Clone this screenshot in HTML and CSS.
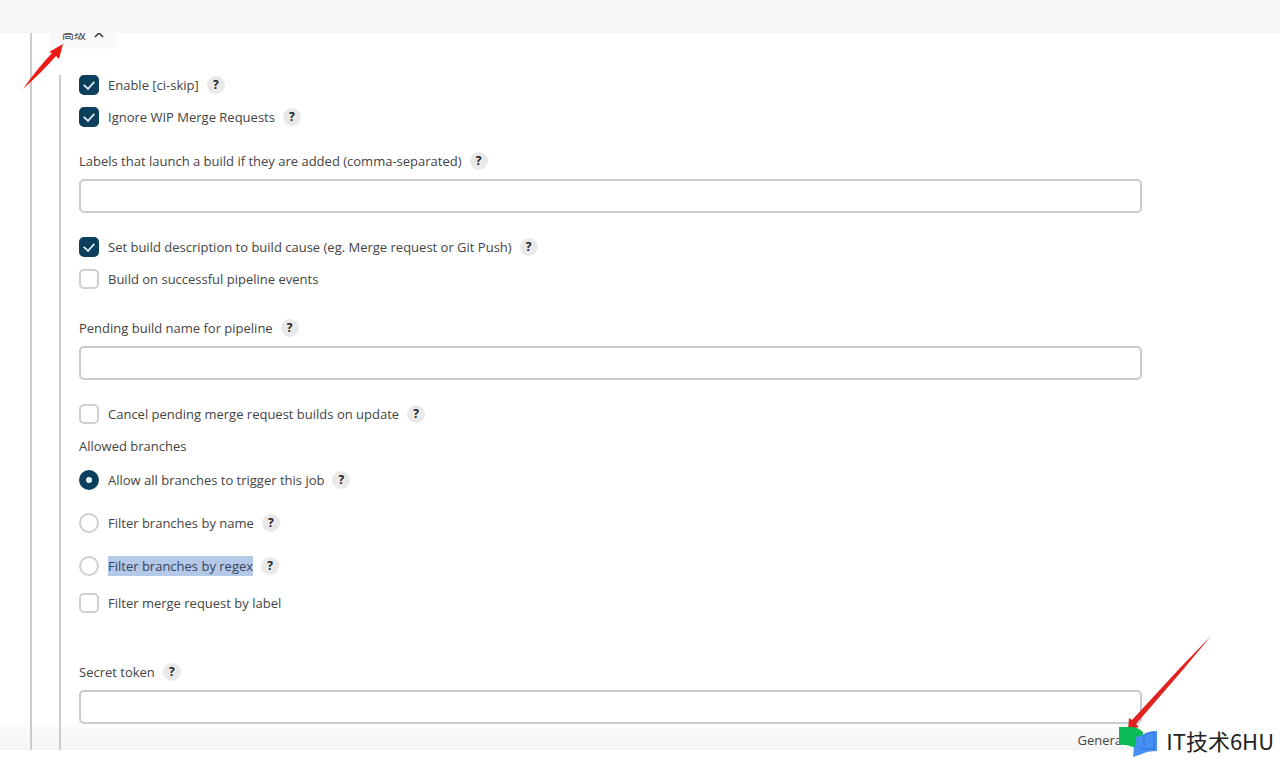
FILE: index.html
```html
<!DOCTYPE html>
<html lang="en">
<head>
    <meta charset="UTF-8">
    <title>GitLab trigger</title>
    <link rel="stylesheet" href="styles.css">
</head>
<body>
    <header class="topbar"></header>

    <form class="config">
        <button type="button" class="advanced">高级
            <svg width="10" height="6" viewBox="0 0 10 6"><path d="M1 5l4-4 4 4" fill="none" stroke="#333" stroke-width="1.5"/></svg>
        </button>

        <div class="panel">
            <div class="options">
                <div class="row">
                    <input type="checkbox" id="ciSkip" checked>
                    <label for="ciSkip">Enable [ci-skip]</label>
                    <button type="button" class="help">?</button>
                </div>
                <div class="row">
                    <input type="checkbox" id="ignoreWip" checked>
                    <label for="ignoreWip">Ignore WIP Merge Requests</label>
                    <button type="button" class="help">?</button>
                </div>
            </div>

            <div class="field">
                <div class="row">
                    <label for="labels">Labels that launch a build if they are added (comma-separated)</label>
                    <button type="button" class="help">?</button>
                </div>
                <input type="text" id="labels">
            </div>

            <div class="options">
                <div class="row">
                    <input type="checkbox" id="description" checked>
                    <label for="description">Set build description to build cause (eg. Merge request or Git Push)</label>
                    <button type="button" class="help">?</button>
                </div>
                <div class="row">
                    <input type="checkbox" id="pipeline">
                    <label for="pipeline">Build on successful pipeline events</label>
                </div>
            </div>

            <div class="field pending">
                <div class="row">
                    <label for="pendingName">Pending build name for pipeline</label>
                    <button type="button" class="help">?</button>
                </div>
                <input type="text" id="pendingName">
            </div>

            <div class="options">
                <div class="row">
                    <input type="checkbox" id="cancelPending">
                    <label for="cancelPending">Cancel pending merge request builds on update</label>
                    <button type="button" class="help">?</button>
                </div>
                <div class="row" id="allowed">Allowed branches</div>
            </div>

            <div class="branches" role="radiogroup" aria-labelledby="allowed">
                <div class="row">
                    <input type="radio" name="branches" id="allBranches" checked>
                    <label for="allBranches">Allow all branches to trigger this job</label>
                    <button type="button" class="help">?</button>
                </div>
                <div class="row">
                    <input type="radio" name="branches" id="byName">
                    <label for="byName">Filter branches by name</label>
                    <button type="button" class="help">?</button>
                </div>
                <div class="row">
                    <input type="radio" name="branches" id="byRegex">
                    <label for="byRegex" class="selected">Filter branches by regex</label>
                    <button type="button" class="help">?</button>
                </div>
            </div>

            <div class="row by-label">
                <input type="checkbox" id="byLabel">
                <label for="byLabel">Filter merge request by label</label>
            </div>

            <div class="field secret">
                <div class="row">
                    <label for="token">Secret token</label>
                    <button type="button" class="help">?</button>
                </div>
                <input type="text" id="token">
            </div>

            <div class="actions">
                <button type="button" class="generate">Generate</button>
            </div>
        </div>
    </form>

    <!-- pointers -->
    <svg class="arrow arrow-top" width="42" height="46" viewBox="0 0 42 46">
        <path d="M0 46Q14 26 29 10L26 9 40 1 36 16 33 13Q20 28 0 46z" fill="#ee1c16"/>
    </svg>
    <svg class="arrow arrow-bottom" width="84" height="94" viewBox="0 0 84 94">
        <path d="M84 0L52 33 5 84 2 82 1 94 12 91 9 88 54 36z" fill="#e0231f"/>
    </svg>

    <div class="brand">
        <svg width="40" height="30" viewBox="0 0 40 30">
            <path d="M1 0h14q6 1 10 5v15q-8 2-13-1-5-2-11-1z" fill="#0bbb55"/>
            <path d="M17 10q5 0 9-3 5-3 13-3v20q-10 0-15 3l-9 3 1-10q4-4 1-10z" fill="#4690f4"/>
            <path d="M26 8v11M36 5v18M27 7l9-2M19 19q7 5 18 2" fill="none" stroke="#2f74de"/>
        </svg>
        <span>IT技术6HU</span>
    </div>
</body>
</html>
```
FILE: styles.css
```css
* { box-sizing: border-box; }
body {
    margin: 0;
    position: relative;
    min-height: 100vh;
    background: #fff;
    color: #444;
    font: 13px/20px "Open Sans", "Noto Sans CJK SC", sans-serif;
}
.topbar {
    position: relative;
    z-index: 1;
    height: 33px;
    background: #f6f6f9;
}
.config {
    position: relative;
    padding: 0 138px 0 60px;
    background: linear-gradient(#fdfdfd, #f4f4f5) left bottom / calc(100% - 138px) 26px no-repeat;
}
.config::before {
    content: "";
    position: absolute;
    top: 0;
    bottom: 0;
    left: 30px;
    border-left: 2px solid #cbcbcd;
}
button {
    border: 0;
    padding: 0;
    font: inherit;
    color: inherit;
    background: none;
}
.advanced {
    display: flex;
    align-items: center;
    gap: 8px;
    height: 28px;
    margin: -12px 0 26px -10px;
    padding: 0 12px;
    border-radius: 6px;
    background: #f9f9fb;
    font-size: 12px;
}
.panel {
    border-left: 2px solid #cbcbcd;
    margin-left: -1px;
    padding-left: 18px;
}
.row {
    display: flex;
    align-items: center;
    height: 20px;
}
.options { display: grid; gap: 12px; }
.branches { display: grid; gap: 23px; margin-top: 14px; }
.by-label { margin-top: 17px; }
.field { margin: 24px 0; }
.pending { margin-top: 29px; }
.secret { margin: 49px 0 0; }

input[type="text"] {
    display: block;
    width: 100%;
    height: 34px;
    margin-top: 8px;
    padding: 0 8px;
    border: 2px solid #c9cccd;
    border-radius: 5px;
    background: #fff;
    font: inherit;
}
input[type="checkbox"], input[type="radio"] {
    appearance: none;
    display: grid;
    place-items: center;
    width: 20px;
    height: 20px;
    margin: 0 9px 0 0;
    border: 2px solid #cfcfd1;
    border-radius: 5px;
    background: #fff;
}
input[type="radio"] { border-radius: 50%; }
input[type="checkbox"]:checked, input[type="radio"]:checked {
    border-color: #0b3f5c;
    background: #0b3f5c;
}
input[type="checkbox"]:checked::before {
    content: "";
    width: 10px;
    height: 6px;
    border: solid #dff4ff;
    border-width: 0 0 2px 2px;
    transform: translateY(-1px) rotate(-48deg) scale(0.85);
}
input[type="radio"]:checked::before {
    content: "";
    width: 6px;
    height: 6px;
    border-radius: 50%;
    background: #e6f7ff;
}
.help {
    width: 18px;
    height: 18px;
    margin-left: 8px;
    border-radius: 50%;
    background: #e9e9ea;
    color: #222;
    font-size: 12px;
    font-weight: 700;
    line-height: 18px;
}
.selected { background: #b4c9e8; color: #34435f; }
.actions {
    display: flex;
    align-items: center;
    justify-content: flex-end;
    height: 26px;
    padding: 6px 8px 0 0;
}

.arrow { position: absolute; z-index: 2; }
.arrow-top { top: 43px; left: 23px; }
.arrow-bottom { top: 636px; right: 69px; }
.brand {
    position: absolute;
    z-index: 3;
    top: 727px;
    right: 6px;
    display: flex;
    align-items: flex-start;
    gap: 8px;
    color: #222;
    font: 22px/26px "Noto Sans CJK SC", sans-serif;
}
```
